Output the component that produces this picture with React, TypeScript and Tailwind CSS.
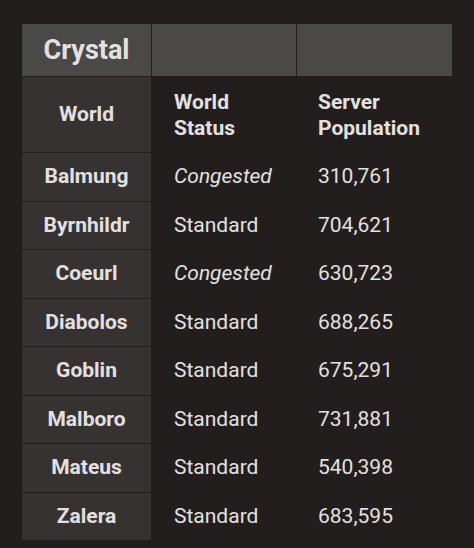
const worlds = [
  { name: "Balmung", status: "Congested", pop: "310,761" },
  { name: "Byrnhildr", status: "Standard", pop: "704,621" },
  { name: "Coeurl", status: "Congested", pop: "630,723" },
  { name: "Diabolos", status: "Standard", pop: "688,265" },
  { name: "Goblin", status: "Standard", pop: "675,291" },
  { name: "Malboro", status: "Standard", pop: "731,881" },
  { name: "Mateus", status: "Standard", pop: "540,398" },
  { name: "Zalera", status: "Standard", pop: "683,595" },
];

export default function App() {
  return (
    <div
      className="w-[474px] h-[548px] bg-[#221e1e] pt-[24px] pl-[22px] text-[#e4e0e0]"
      style={{ fontFamily: "Roboto, 'Liberation Sans', sans-serif" }}
    >
      <div className="grid grid-cols-[129px_144px_155px] gap-px w-[430px]">
        {/* data center header */}
        <div className="h-[52px] bg-[#4b4848] flex items-center justify-center text-[27px] font-bold">
          Crystal
        </div>
        <div className="h-[52px] bg-[#4b4848]" />
        <div className="h-[52px] bg-[#4b4848]" />

        {/* column headers */}
        <div className="h-[75px] bg-[#363232] flex items-center justify-center text-[21px] font-bold">
          World
        </div>
        <div className="h-[75px] flex items-center pl-[22px] text-[21px] font-bold leading-[26px]">
          World
          <br />
          Status
        </div>
        <div className="h-[75px] flex items-center pl-[21px] text-[21px] font-bold leading-[26px]">
          Server
          <br />
          Population
        </div>

        {worlds.map((w) => (
          <div key={w.name} className="contents">
            <div className="h-[47.5px] bg-[#363232] flex items-center justify-center text-[21px] font-bold">
              {w.name}
            </div>
            <div
              className={`h-[47.5px] flex items-center pl-[22px] text-[21px] ${
                w.status === "Congested" ? "italic" : ""
              }`}
            >
              {w.status}
            </div>
            <div className="h-[47.5px] flex items-center pl-[21px] text-[21px]">
              {w.pop}
            </div>
          </div>
        ))}
      </div>
    </div>
  );
}
